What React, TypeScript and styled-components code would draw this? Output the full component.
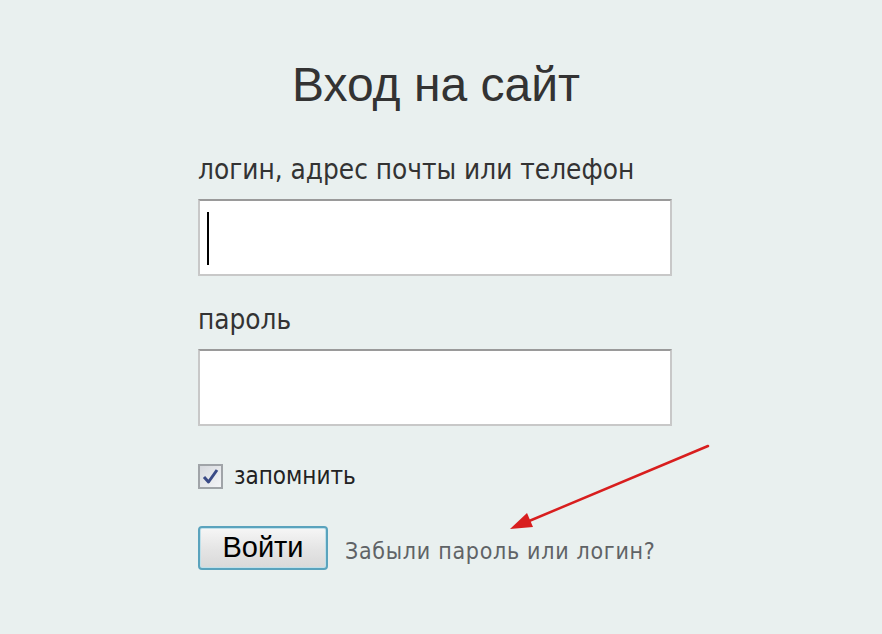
import React from "react";
import styled, { createGlobalStyle } from "styled-components";

const Global = createGlobalStyle`
  html, body { margin: 0; padding: 0; background: #e9f0ef; }
  body { font-family: "Liberation Sans", Arial, sans-serif; }
`;

const Page = styled.div`
  position: relative;
  width: 882px;
  height: 634px;
  background: #e9f0ef;
  overflow: hidden;
`;

const Form = styled.div`
  display: flex;
  flex-direction: column;
  width: 474px;
  padding: 57px 0 0 198px;
`;

const Title = styled.h1`
  margin: 0 0 0 94px;
  font-family: "Liberation Sans", Arial, sans-serif;
  font-weight: normal;
  font-size: 48px;
  line-height: 56px;
  color: #333;
  white-space: nowrap;
`;

const Label = styled.div<{ $top: number }>`
  font-family: "DejaVu Sans Condensed", "DejaVu Sans", sans-serif;
  font-size: 27.7px;
  line-height: 34px;
  color: #333;
  margin-top: ${(p) => p.$top}px;
  margin-bottom: 12px;
  white-space: nowrap;
`;

const Field = styled.div`
  position: relative;
  box-sizing: border-box;
  width: 474px;
  height: 77px;
  background: #fff;
  border: 2px solid #c8c8c8;
  border-top-color: #9a9a9a;
`;

const Caret = styled.div`
  position: absolute;
  left: 7px;
  top: 11px;
  width: 2px;
  height: 53px;
  background: #000;
`;

const CheckRow = styled.label`
  display: flex;
  align-items: center;
  gap: 11px;
  margin-top: 36px;
  font-family: "DejaVu Sans Condensed", "DejaVu Sans", sans-serif;
  font-size: 24px;
  color: #222;
`;

const Box = styled.span`
  box-sizing: border-box;
  width: 25px;
  height: 25px;
  border: 2px solid #a0a4a8;
  background: linear-gradient(135deg, #d6d9de, #f4f5f7);
  display: flex;
  align-items: center;
  justify-content: center;
`;

const ActionRow = styled.div`
  display: flex;
  align-items: center;
  gap: 17px;
  margin-top: 36px;
`;

const Button = styled.button`
  box-sizing: border-box;
  width: 130px;
  height: 44px;
  border: 2px solid #5aa3bd;
  border-radius: 4px;
  background: linear-gradient(#f6f6f6, #e4e4e4 55%, #d9d9d9);
  box-shadow: inset 0 0 0 1px #bfe0ea;
  font-family: "Liberation Sans", Arial, sans-serif;
  font-size: 29px;
  line-height: 36px;
  color: #000;
  padding: 0 0 2px;
`;

const Forgot = styled.a`
  font-family: "DejaVu Sans Condensed", "DejaVu Sans", sans-serif;
  font-size: 23px;
  color: #5f6366;
  text-decoration: none;
  letter-spacing: 0.7px;
  margin-top: 6px;
`;

const Arrow = styled.svg`
  position: absolute;
  left: 500px;
  top: 438px;
`;

export default function App() {
  return (
    <Page>
      <Global />
      <Form>
        <Title>Вход на сайт</Title>
        <Label $top={40}>логин, адрес почты или телефон</Label>
        <Field>
          <Caret />
        </Field>
        <Label $top={27}>пароль</Label>
        <Field />
        <CheckRow>
          <Box>
            <svg width="17" height="17" viewBox="0 0 17 17">
              <path d="M2 9 L6.5 14 L15 2" fill="none" stroke="#3a4a86" strokeWidth="3" strokeLinejoin="round" />
            </svg>
          </Box>
          запомнить
        </CheckRow>
        <ActionRow>
          <Button>Войти</Button>
          <Forgot href="#">Забыли пароль или логин?</Forgot>
        </ActionRow>
      </Form>
      <Arrow width="220" height="100" viewBox="0 0 220 100">
        <line x1="208" y1="8" x2="22" y2="86" stroke="#d81e1e" strokeWidth="2.5" strokeLinecap="round" />
        <path d="M10 91 L27 75 L33 89 Z" fill="#d81e1e" />
      </Arrow>
    </Page>
  );
}
